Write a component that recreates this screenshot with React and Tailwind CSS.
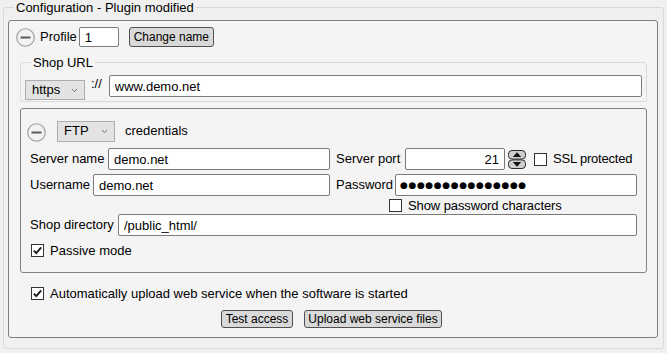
import React from 'react';

const MinusCircle = () => (
  <svg width="19" height="19" viewBox="0 0 19 19" className="shrink-0">
    <circle cx="9.5" cy="9.5" r="8.8" fill="#f2f2f2" stroke="#9b9b9b" strokeWidth="1.1" />
    <rect x="4.5" y="8.5" width="10" height="2" fill="#5c5c5c" />
  </svg>
);

const Chevron = () => (
  <svg width="7" height="5" viewBox="0 0 7 5" className="shrink-0">
    <path d="M0.8 1 L3.5 3.6 L6.2 1" fill="none" stroke="#707070" strokeWidth="1" />
  </svg>
);

const Check = ({ checked }) => (
  <span className="w-[13px] h-[13px] border border-[#333] bg-white flex items-center justify-center shrink-0">
    {checked && (
      <svg width="11" height="11" viewBox="0 0 11 11">
        <path d="M1.8 5.6 L4.3 8.2 L9.2 2.4" fill="none" stroke="#1e1e1e" strokeWidth="1.9" />
      </svg>
    )}
  </span>
);

const Spinner = () => (
  <svg width="18" height="19" viewBox="0 0 18 19" className="shrink-0">
    <rect x="0.5" y="0.5" width="17" height="8.6" rx="3.5" fill="#cfcfcf" stroke="#2e2e2e" />
    <rect x="0.5" y="9.9" width="17" height="8.6" rx="3.5" fill="#cfcfcf" stroke="#2e2e2e" />
    <path d="M9 2.3 L13.2 7 H4.8 Z" fill="#111" />
    <path d="M9 16.7 L13.2 12 H4.8 Z" fill="#111" />
  </svg>
);

const Select = ({ value, className }) => (
  <div className={`bg-[#e3e3e3] border border-[#adadad] flex items-center justify-between pl-[6px] pr-[6px] shrink-0 ${className}`}>
    <span>{value}</span>
    <Chevron />
  </div>
);

const Field = ({ value, className = '' }) => (
  <input
    readOnly
    defaultValue={value}
    className={`h-[22px] border border-[#7a7a7a] rounded-[2px] bg-white px-[5px] outline-none shrink-0 text-black ${className}`}
  />
);

const Btn = ({ children, className = '' }) => (
  <button className={`bg-[#d9d9d9] border border-[#505050] rounded-[3px] flex items-center justify-center leading-none whitespace-nowrap px-0 text-[12px] ${className}`}>
    {children}
  </button>
);

export default function App() {
  return (
    <div className="w-[667px] h-[353px] bg-[#f0f0f0] font-['Liberation_Sans',Arial,sans-serif] text-[13px] text-black overflow-hidden whitespace-nowrap">
      <fieldset className="mx-[3px] border border-[#d9d9d9] rounded-[3px] pl-[4px] pr-[5px] pb-[10px]">
        <legend className="ml-[6px] px-[2px] leading-[15px]">Configuration - Plugin modified</legend>

        <div className="mt-[5px] border border-[#7f7f7f] rounded-[3px] bg-[#f4f4f4] pt-[6px] pl-[7px] pr-[10px] pb-[9px]">
          {/* profile row */}
          <div className="flex items-center h-[20px]">
            <MinusCircle />
            <span className="ml-[5px]">Profile</span>
            <Field value="1" className="ml-[2px] w-[40px] !h-[20px]" />
            <Btn className="ml-[10px] w-[85px] h-[20px]">Change name</Btn>
          </div>

          {/* shop url */}
          <fieldset className="mt-[8px] ml-[4px] border border-[#dadada] rounded-[3px] pl-[4px] pr-[4px] pb-[1px]">
            <legend className="ml-[6px] px-[2px] leading-[15px]">Shop URL</legend>
            <div className="flex items-start">
              <Select value="https" className="mt-[10px] w-[60px] h-[20px]" />
              <span className="ml-[6px] mt-[6px] leading-[15px]">://</span>
              <Field value="www.demo.net" className="ml-[7px] mt-[5px] flex-1 min-w-0" />
            </div>
          </fieldset>

          {/* ftp panel */}
          <div className="mt-[6px] ml-[4px] border border-[#828282] rounded-[3px] pt-[11px] pb-[15px]">
            <div className="flex items-center h-[22px]">
              <span className="ml-[6px] mt-[2px] flex"><MinusCircle /></span>
              <Select value="FTP" className="ml-[11px] w-[58px] h-[21px]" />
              <span className="ml-[10px]">credentials</span>
            </div>

            <div className="flex items-center h-[22px] mt-[6px]">
              <span className="ml-[9px] w-[78px] shrink-0">Server name</span>
              <Field value="demo.net" className="w-[222px]" />
              <span className="ml-[6px] w-[69px] shrink-0">Server port</span>
              <Field value="21" className="w-[100px] text-right" />
              <span className="ml-[3px] flex"><Spinner /></span>
              <span className="ml-[8px]"><Check /></span>
              <span className="ml-[6px] tracking-[-0.2px]">SSL protected</span>
            </div>

            <div className="flex items-center h-[22px] mt-[4px]">
              <span className="ml-[9px] w-[63px] shrink-0">Username</span>
              <Field value="demo.net" className="w-[237px]" />
              <span className="ml-[6px] w-[59px] shrink-0">Password</span>
              <div className="w-[242px] h-[22px] border border-[#7a7a7a] rounded-[2px] bg-white px-[4px] flex items-center shrink-0">
                <span className="font-['DejaVu_Sans',sans-serif] text-[9px] tracking-[0.6px] leading-none">●●●●●●●●●●●●●●●</span>
              </div>
            </div>

            <div className="flex items-center h-[13px] mt-[3px]">
              <span className="ml-[368px]"><Check /></span>
              <span className="ml-[6px] leading-[13px] tracking-[-0.1px]">Show password characters</span>
            </div>

            <div className="flex items-center h-[22px] mt-[2px]">
              <span className="ml-[9px] w-[88px] shrink-0">Shop directory</span>
              <Field value="/public_html/" className="w-[519px]" />
            </div>

            <div className="flex items-center h-[13px] mt-[8px]">
              <span className="ml-[10px]"><Check checked /></span>
              <span className="ml-[6px] leading-[13px]">Passive mode</span>
            </div>
          </div>

          <div className="flex items-center h-[13px] mt-[14px]">
            <span className="ml-[15px]"><Check checked /></span>
            <span className="ml-[6px] leading-[13px]">Automatically upload web service when the software is started</span>
          </div>

          <div className="flex justify-center gap-[11px] mt-[10px]">
            <Btn className="w-[72px] h-[18px]">Test access</Btn>
            <Btn className="w-[138px] h-[18px]">Upload web service files</Btn>
          </div>
        </div>
      </fieldset>
    </div>
  );
}
